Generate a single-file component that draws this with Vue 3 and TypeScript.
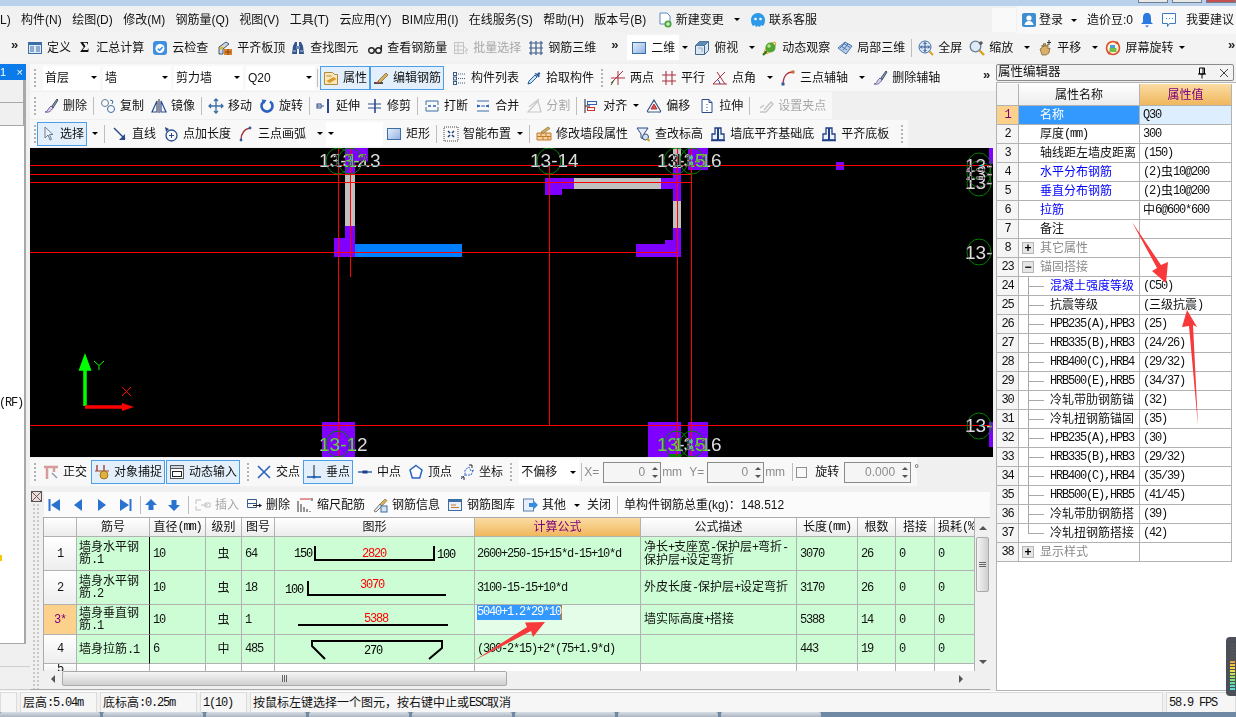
<script setup lang="ts">
interface Item {
  t?: string
  i?: string
  caret?: boolean
  cs?: boolean
  off?: boolean
  on?: boolean
  join?: boolean
  sep?: boolean
  grip?: boolean
  chev?: boolean
  sel?: number
  ml?: number
  tint?: boolean
}

// 16x16 toolbar icons
const icons: Record<string, string> = {
  def: '<rect x="1.5" y="2.5" width="13" height="11" fill="#dfe8f5" stroke="#3a6ea5"/><rect x="1.5" y="2.5" width="13" height="2.5" fill="#3a6ea5"/><path d="M3 7h4M3 9h4M3 11h4M9 7h4M9 9h4M9 11h4" stroke="#3a6ea5"/>',
  cloud: '<rect x="1" y="1" width="14" height="14" rx="3" fill="#3f8fe0"/><circle cx="8" cy="8.5" r="4.5" fill="#fff"/><path d="M5.8 8.5l1.8 1.8 3-3.3" fill="none" stroke="#3f8fe0" stroke-width="1.5"/>',
  flush: '<path d="M2 14V7l7-5 3 2-6 5v5z" fill="#cfd8e6" stroke="#456"/><rect x="7" y="9" width="8" height="6" fill="#d9822b"/><path d="M8 12h6M11 9v6" stroke="#8b4513"/><path d="M3 9l3-2" stroke="#e8b400" stroke-width="2"/>',
  binoc: '<path d="M2 14l1-8 2-4h2v12zM9 14V2h2l2 4 1 8z" fill="#33558f"/><rect x="6" y="6" width="4" height="3" fill="#6d88b5"/><path d="M3 11h3M10 11h3" stroke="#bcd"/>',
  glasses: '<g fill="none" stroke="#222" stroke-width="1.4"><circle cx="4.5" cy="10.5" r="2.8"/><circle cx="11.5" cy="10.5" r="2.8"/><path d="M7.3 10h1.4M14.3 10V5"/></g>',
  batch: '<g fill="none" stroke="#c4c4c4"><rect x="1.5" y="2.5" width="9" height="11"/><path d="M1.5 6h9M1.5 10h9M5 2.5v11M10 6l5 4-3 1 2 3"/></g>',
  bar3d: '<g fill="none" stroke="#3c5a88" stroke-width="1.2"><path d="M1 3h14M1 13h14M3 1v14M8 1v14M13 1v14M1 8h14"/></g>',
  rect: '<defs><linearGradient id="rg" x1="0" y1="0" x2="1" y2="1"><stop offset="0" stop-color="#e8f0fb"/><stop offset="1" stop-color="#8fb0e4"/></linearGradient></defs><rect x="1.5" y="2.5" width="13" height="11" fill="url(#rg)" stroke="#3a6ea5"/>',
  top: '<path d="M1.5 5.5l4-4h9v9l-4 4h-9z" fill="#dbe8f4" stroke="#44688c"/><path d="M1.5 5.5h9v9M10.5 5.5l4-4" fill="none" stroke="#44688c"/><path d="M1.5 5.5l4-4h9l-4 4z" fill="#5b8ab4"/><path d="M4 8h4v4" fill="none" stroke="#9ab"/>',
  orbit: '<ellipse cx="8" cy="8" rx="7.5" ry="2.6" transform="rotate(-45 8 8)" fill="none" stroke="#d9a21b"/><circle cx="8.5" cy="7.5" r="5" fill="#4fa52f"/><circle cx="7" cy="6" r="1.8" fill="#b8e68e"/><path d="M1 15l4-4" stroke="#2b6e16" stroke-width="2"/>',
  local3d: '<path d="M1 8l7-6 7 4-6 8z" fill="#b9d0ec" stroke="#4a75a8"/><path d="M4 6l6 4M7 3.5l6 4M6 10l5-6M3 8l5-5" stroke="#4a75a8" fill="none"/>',
  full: '<circle cx="7" cy="7" r="6" fill="#dbe8f8" stroke="#3c6ca8"/><path d="M7 2.5v9M2.5 7h9" stroke="#2d4f86"/><path d="M5.5 4L7 2.5 8.5 4M5.5 10L7 11.5 8.5 10M4 5.5L2.5 7 4 8.5M10 5.5L11.5 7 10 8.5" fill="none" stroke="#2d4f86"/><path d="M11.5 11.5l3.5 3.5" stroke="#d9a21b" stroke-width="2"/>',
  zoom: '<circle cx="6.5" cy="6.5" r="5.3" fill="#dfeaf7" stroke="#6a7f96" stroke-width="1.3"/><path d="M10.5 10.5l4.5 4.5" stroke="#d9a21b" stroke-width="2.4"/><path d="M12 1v4M10 3h4" stroke="#333"/>',
  hand: '<path d="M3 9l2-1V5l1.5 2V3.5L8 6.5V3l1.5 3.5L11 4v5l2-1-1 5-3 2H5z" fill="#d8b06a" stroke="#7a5c2a" stroke-width=".7"/><path d="M12 0v5M10 2.5h4" stroke="#333"/>',
  spin: '<circle cx="8" cy="8" r="6.5" fill="#fff4d0" stroke="#e04a2a" stroke-width="1.6"/><rect x="4.5" y="8" width="7" height="4" fill="#6fc04a"/><rect x="5" y="5" width="5" height="3" fill="#4a9de0"/><path d="M12 1l2 3h-3.5zM4 15L2 12h3.5z" fill="#e04a2a"/>',
  attr: '<path d="M1.5 2.5h8l2 2h3v10h-13z" fill="#fbe7b9" stroke="#b38a3c"/><path d="M3.5 11l7-4 3 2-7 4z" fill="#d99a2b"/><path d="M3.5 6h5" stroke="#b38a3c"/>',
  edit: '<path d="M1 13h9" stroke="#222" stroke-width="1.6"/><path d="M5 11l8-8 2 2-8 8z" fill="#d8b15c" stroke="#7a5c2a" stroke-width=".7"/><path d="M3 13l2-2 2 2z" fill="#d9482a"/>',
  list: '<g fill="none" stroke="#3a5a88"><rect x="2.5" y="2.5" width="3" height="3"/><rect x="2.5" y="7" width="3" height="3"/><rect x="2.5" y="11.5" width="3" height="3"/><path d="M7 4h7M7 8.5h7M7 13h7" stroke-dasharray="1 1"/></g>',
  pick: '<path d="M2 14l1-3 6-6 2 2-6 6z" fill="#cde3f8" stroke="#2a5d9c"/><path d="M8.5 3.5l4 4 1.5-1.5-1-1 1.5-1.5-1.5-1.5L11 4l-1-1z" fill="#2a5d9c"/>',
  twop: '<path d="M1 13L13 1M1 8h14M8 1v14" stroke="#b03040" fill="none"/><path d="M1 15l3-5" stroke="#2a6a2a"/>',
  par: '<path d="M1 5h14M1 11h14M5 1v14M11 1v14" stroke="#a83040" fill="none" stroke-width="1.1"/>',
  ang: '<path d="M1 14h14M1 14L13 2M5 2l8 12" stroke="#a83040" fill="none"/><path d="M8 14a7 7 0 0 0-2-4" stroke="#2a4a9c" fill="none"/>',
  arc: '<path d="M3 15C3 6 7 2 13 2" stroke="#b03040" fill="none" stroke-width="1.3"/><rect x="1.5" y="12.5" width="3" height="3" fill="#2a5d9c"/><rect x="11.5" y="0.5" width="3" height="3" fill="#d06a2a"/>',
  brush: '<path d="M9 8l5-7 1 1-5 8z" fill="#8aa0c0" stroke="#456"/><path d="M2 14c3 0 3-4 6-6l2 2c-2 3-4 5-8 4z" fill="#d8d0e8" stroke="#7060a0"/>',
  copy: '<circle cx="5" cy="5" r="3.5" fill="none" stroke="#6a7f96"/><circle cx="11" cy="11" r="3.5" fill="none" stroke="#3a6ea5"/><path d="M10 2l3 1-1 3" fill="none" stroke="#3a6ea5"/>',
  mirror: '<path d="M8 1v14" stroke="#223"/><path d="M6 3v11H1zM10 3v11h5z" fill="none" stroke="#2a4a8c" stroke-width="1.2"/>',
  move: '<path d="M8 1v14M1 8h14M6 3l2-2 2 2M6 13l2 2 2-2M3 6L1 8l2 2M13 6l2 2-2 2" fill="none" stroke="#3a6ea5" stroke-width="1.3"/>',
  rot: '<path d="M11 3.5a5.5 5.5 0 1 1-6 0" fill="none" stroke="#2a62c0" stroke-width="2.6"/><path d="M2.5 1.5l5 .5-2.5 4z" fill="#2a62c0"/>',
  ext: '<path d="M1 8h7" stroke="#2a4a8c" stroke-width="1.2" stroke-dasharray="3 1"/><rect x="1" y="6" width="4" height="4" fill="none" stroke="#2a4a8c"/><path d="M12 1v14" stroke="#2a4a8c" stroke-width="2"/>',
  trim: '<path d="M1 6h13M1 10h13" stroke="#2a4a8c"/><path d="M8 1v14" stroke="#2a4a8c" stroke-width="1.6"/>',
  cut: '<path d="M2 3h12M2 13h12M2 3v4M14 3v4M2 9v4M14 9v4" fill="none" stroke="#3a6ea5"/><path d="M4 8h3M9 8h3" stroke="#2a62c0" stroke-width="1.5"/>',
  merge: '<path d="M2 3h12M2 13h12" stroke="#3a6ea5"/><path d="M2 7l3 1-3 1M14 7l-3 1 3 1" fill="#2a62c0" stroke="#2a62c0"/><path d="M6 8h4" stroke="#2a62c0"/>',
  split: '<path d="M2 14h13L12 3zM13 1L3 9" fill="none" stroke="#c8c8c8" stroke-width="1.2"/>',
  align: '<path d="M2 1v14" stroke="#223"/><rect x="4.5" y="3.5" width="9" height="3" fill="none" stroke="#2a62c0"/><rect x="4.5" y="9.5" width="7" height="3" fill="none" stroke="#d03030"/><path d="M2 8h5" stroke="#223"/>',
  offset: '<path d="M8 2l6 10a1 1 0 0 1-1 2H3a1 1 0 0 1-1-2z" fill="#fff" stroke="#3a5a88" stroke-width="1.2"/><path d="M8 6l3 5H5z" fill="#e05050" stroke="#b03030"/>',
  stretch: '<path d="M3 1.5h7l3 3v10H3z" fill="#fff" stroke="#2a4a8c"/><path d="M8 6v1M8 9v1M8 12v1M10 1.5v3h3" stroke="#2a4a8c" fill="none"/>',
  grip: '<path d="M2 14h6M6 12l7-8 2 2-7 8M2 10l4-3" fill="none" stroke="#c4c4c4" stroke-width="1.4"/>',
  cursor: '<path d="M5 1v11l3-3 2 5 1.5-.6L9.5 8.5H13z" fill="#eef2f8" stroke="#6a7f96"/>',
  line: '<path d="M2 2l11 11" stroke="#2a4a8c" stroke-width="1.4"/><path d="M13 8v6H7z" fill="#2a4a8c"/>',
  plen: '<circle cx="8.5" cy="9.5" r="5.5" fill="none" stroke="#2a4a8c" stroke-width="1.3"/><path d="M8.5 7v5M6 9.5h5" stroke="#2a4a8c"/><path d="M2 1l4 2-3 3z" fill="#2a4a8c"/>',
  arc3: '<path d="M3 14C3 7 7 3 12 2" stroke="#a83040" fill="none" stroke-width="1.3"/><circle cx="3" cy="14" r="1.4" fill="#2a5d9c"/><circle cx="12" cy="2" r="1.4" fill="#2a5d9c"/>',
  smart: '<rect x="1" y="1" width="14" height="14" fill="none" stroke="#444" stroke-dasharray="1 1"/><path d="M5 5l2 2M11 5L9 7M5 11l2-2M11 11L9 9" stroke="#1a3a7c" stroke-width="1.5"/>',
  wall: '<path d="M1 14V7h14v7zM1 10.5h14M5 7v3.5M10 7v3.5M7 10.5V14M12 10.5V14" fill="#f3d2a0" stroke="#c47a2a"/><path d="M5 6l7-5 2 1.5-7 5z" fill="#d8b15c" stroke="#7a5c2a" stroke-width=".6"/>',
  elev: '<path d="M2 2h11L9 8v5l-3-1V8z" fill="#e8ecf4" stroke="#2a4a8c"/><circle cx="10.5" cy="11" r="3" fill="#cfe0f5" stroke="#456"/><path d="M12.5 13l2 2" stroke="#d9a21b" stroke-width="2"/>',
  base: '<path d="M2 14V8h3V2h6v6h3v6z" fill="#eef3fa" stroke="#1f3f86" stroke-width="1.3"/><path d="M8 2v12" stroke="#1f3f86" stroke-width="2"/><path d="M1 14.5h14" stroke="#1f3f86" stroke-width="1.5"/>',
  ortho: '<path d="M1 3h14M4 3v12M11 3v5" stroke="#d89a9a" stroke-width="2.5" fill="none"/><path d="M9 9l5 5" stroke="#8a9ab0" stroke-width="1.4"/>',
  snap: '<path d="M3 1v6M10 1v6" stroke="#a04030" stroke-width="1.4"/><path d="M1 7h14" stroke="#a04030"/><circle cx="10" cy="11" r="4" fill="#e0b040" stroke="#a07820"/>',
  dyn: '<rect x="1.5" y="1.5" width="13" height="13" fill="#fff" stroke="#555"/><rect x="1.5" y="1.5" width="13" height="3" fill="#c8d4e4" stroke="#555"/><rect x="3.5" y="7.5" width="9" height="5" fill="#fff" stroke="#222"/>',
  cross: '<path d="M2 2l12 12M14 2L2 14" stroke="#2a62c0" stroke-width="1.6"/>',
  perp: '<path d="M1 13h14" stroke="#1f5fb0" stroke-width="1.6"/><path d="M8 1v12" stroke="#222"/><circle cx="8" cy="13" r="1.6" fill="#1f5fb0"/>',
  mid: '<path d="M1 8h14" stroke="#1f5fb0" stroke-width="1.4"/><rect x="5.5" y="6.5" width="5" height="3" fill="#1f3f86"/>',
  vert: '<path d="M8 1.5l6 4.5-2.3 8H4.3L2 6z" fill="#fff" stroke="#2a62c0" stroke-width="1.5"/>',
  coord: '<path d="M2 15l4-4v-5l4-3 2 4 3-1M6 11h6l2-4" fill="none" stroke="#2a62c0" stroke-dasharray="2 1"/><path d="M2 13h3v3M10 1h3v3" fill="none" stroke="#223"/>',
  first: '<path d="M2.5 2v12h2V2zM14 2v12L5 8z" fill="#2a72d0"/>',
  prev: '<path d="M12 2v12L4 8z" fill="#2a72d0"/>',
  next: '<path d="M4 2v12l8-6z" fill="#2a72d0"/>',
  last: '<path d="M2 2v12l9-6zM11.5 2v12h2V2z" fill="#2a72d0"/>',
  up: '<path d="M8 2l6 6h-3.5v5h-5V8H2z" fill="#2a72d0"/>',
  down: '<path d="M8 14L2 8h3.5V3h5v5H14z" fill="#2a72d0"/>',
  ins: '<path d="M1 3h5M1 13h5M1 3v4M1 9v4M6 8h7M10 6h5v4h-5z" fill="none" stroke="#c0c0c0"/>',
  del: '<path d="M1.5 2.5h9M1.5 6.5h9M1.5 10.5h9M1.5 2.5v8M10.5 2.5v8" fill="none" stroke="#3a5a88"/><path d="M7 8.5h6" stroke="#222"/><path d="M13 6.5l3 2-3 2z" fill="#222"/>',
  scale: '<path d="M1 15V4M4 15V7M7 15v-5M10 15v-3M13 15v-1" stroke="#333"/><path d="M3 2h11" stroke="#d03030"/><path d="M15 1v3" stroke="#333"/>',
  info: '<path d="M8 7l5-5 2 1.5-5 5.5z" fill="#d8b15c" stroke="#7a5c2a" stroke-width=".6"/><path d="M2 14l6-7 2 2-6 6z" fill="#e8e8e8" stroke="#777"/><rect x="9" y="9" width="6" height="6" fill="#d6e2f2" stroke="#3a6ea5"/>',
  lib: '<rect x="1.5" y="2.5" width="13" height="11" fill="#eef" stroke="#3a6ea5"/><rect x="1.5" y="2.5" width="13" height="2.5" fill="#3a6ea5"/><path d="M4 8h5M4 10.5h8" stroke="#c08020"/>',
  other: '<rect x="1.5" y="2" width="10" height="12" fill="#e8eef8" stroke="#5a7fa8"/><path d="M7 6h4V3l5 5-5 5v-3H7z" fill="#3a8ae0"/>',
}

const mainBar: Item[] = [
  { i: 'def', t: '定义' }, { t: 'Σ', tint: true, ml: 2 }, { t: '汇总计算' }, { i: 'cloud', t: '云检查', ml: 1 },
  { i: 'flush', t: '平齐板顶', ml: 2 }, { i: 'binoc', t: '查找图元', ml: -2 }, { i: 'glasses', t: '查看钢筋量', ml: 2 },
  { i: 'batch', t: '批量选择', off: true, ml: -1 }, { i: 'bar3d', t: '钢筋三维' },
]
const viewBar: Item[] = [
  { i: 'top', t: '俯视', caret: true }, { i: 'orbit', t: '动态观察' }, { i: 'local3d', t: '局部三维' }, { sep: true },
  { i: 'full', t: '全屏' }, { i: 'zoom', t: '缩放', caret: true }, { i: 'hand', t: '平移', caret: true }, { i: 'spin', t: '屏幕旋转', caret: true, cs: true },
]
const rows: { cls: string; items: Item[] }[] = [
  {
    cls: 'full',
    items: [
      { grip: true }, { sel: 57, t: '首层' }, { sel: 68, t: '墙' }, { sel: 69, t: '剪力墙' }, { sel: 69, t: 'Q20' }, { sep: true },
      { i: 'attr', t: '属性', on: true, join: true, ml: -4 }, { i: 'edit', t: '编辑钢筋', on: true }, { i: 'list', t: '构件列表' }, { i: 'pick', t: '拾取构件' },
      { grip: true }, { i: 'twop', t: '两点' }, { i: 'par', t: '平行' }, { i: 'ang', t: '点角', caret: true }, { i: 'arc', t: '三点辅轴', caret: true }, { i: 'brush', t: '删除辅轴' },
      { chev: true },
    ],
  },
  {
    cls: 'padded',
    items: [
      { grip: true }, { i: 'brush', t: '删除' }, { sep: true }, { i: 'copy', t: '复制' }, { i: 'mirror', t: '镜像' }, { sep: true },
      { i: 'move', t: '移动' }, { i: 'rot', t: '旋转' }, { sep: true }, { i: 'ext', t: '延伸' }, { i: 'trim', t: '修剪' }, { sep: true },
      { i: 'cut', t: '打断' }, { i: 'merge', t: '合并' }, { i: 'split', t: '分割', off: true }, { sep: true },
      { i: 'align', t: '对齐', caret: true, cs: true }, { i: 'offset', t: '偏移' }, { i: 'stretch', t: '拉伸', ml: 2 }, { sep: true }, { i: 'grip', t: '设置夹点', off: true, ml: 2 },
    ],
  },
  {
    cls: '',
    items: [
      { grip: true }, { i: 'cursor', t: '选择', on: true, ml: -6 }, { caret: true, ml: -2 }, { sep: true }, { i: 'line', t: '直线', ml: 1 }, { i: 'plen', t: '点加长度' },
      { i: 'arc3', t: '三点画弧', caret: true }, { sel: 57, ml: -4 }, { i: 'rect', t: '矩形' }, { sep: true }, { i: 'smart', t: '智能布置', caret: true, cs: true }, { sep: true },
      { i: 'wall', t: '修改墙段属性' }, { i: 'elev', t: '查改标高' }, { i: 'base', t: '墙底平齐基础底' }, { i: 'base', t: '平齐底板' },
    ],
  },
]
const snapBar: Item[] = [
  { grip: true }, { i: 'ortho', t: '正交' }, { i: 'snap', t: '对象捕捉', on: true, join: true, ml: -3 }, { i: 'dyn', t: '动态输入', on: true, ml: 1 }, { grip: true },
  { i: 'cross', t: '交点' }, { i: 'perp', t: '垂点', on: true, ml: -4 }, { i: 'mid', t: '中点', ml: -3 }, { i: 'vert', t: '顶点' }, { i: 'coord', t: '坐标' },
  { grip: true }, { sel: 60, t: '不偏移' },
]
const rebarBar: Item[] = [
  { i: 'first', ml: 1 }, { i: 'prev', ml: 1 }, { i: 'next', ml: 1 }, { i: 'last', ml: 1 }, { sep: true }, { i: 'up', ml: -4 }, { i: 'down' }, { sep: true },
  { i: 'ins', t: '插入', off: true }, { i: 'del', t: '删除' }, { i: 'scale', t: '缩尺配筋' }, { i: 'info', t: '钢筋信息' }, { i: 'lib', t: '钢筋图库' },
  { i: 'other', t: '其他', caret: true }, { t: '关闭' }, { sep: true }, { t: '单构件钢筋总重(kg)：148.512' },
]

const menus = ['(L)', '构件(N)', '绘图(D)', '修改(M)', '钢筋量(Q)', '视图(V)', '工具(T)', '云应用(Y)', 'BIM应用(I)', '在线服务(S)', '帮助(H)', '版本号(B)']

// mixed cells: ascii runs take the narrow mono look, everything else the CJK font
const runs = (s: string) =>
  (s.match(/[\x00-\x7f]+|[^\x00-\x7f]+/g) ?? []).map((r) => ({ s: r, lat: r.charCodeAt(0) < 128 }))

const heads = [
  { t: '' }, { t: '筋号' }, { t: '直径(mm)' }, { t: '级别' }, { t: '图号' }, { t: '图形' },
  { t: '计算公式', hot: true }, { t: '公式描述' }, { t: '长度(mm)' }, { t: '根数' }, { t: '搭接' }, { t: '损耗(%', left: true },
]

interface Fig {
  path: string
  w: number
  labels: { x: number; y: number; t: string; red?: boolean; mid?: boolean }[]
}
const bars: { n: string; h: string; name: string; dia: string; grade: string; no: string; fig: Fig; formula: string; desc: string; len: string; cnt: string; cur?: boolean }[] = [
  {
    n: '1', h: 'h34', name: '墙身水平钢筋.1', dia: '10', grade: '虫', no: '64',
    fig: { path: 'M40 9V23H159V9', w: 2, labels: [{ x: 19, y: 20, t: '150' }, { x: 99, y: 20, t: '2820', red: true, mid: true }, { x: 162, y: 21, t: '100' }] },
    formula: '2600+250-15+15*d-15+10*d', desc: '净长+支座宽-保护层+弯折-\n保护层+设定弯折', len: '3070', cnt: '26',
  },
  {
    n: '2', h: 'h34', name: '墙身水平钢筋.2', dia: '10', grade: '虫', no: '18',
    fig: { path: 'M33 10V24H171', w: 2, labels: [{ x: 10, y: 22, t: '100' }, { x: 97, y: 17, t: '3070', red: true, mid: true }] },
    formula: '3100-15-15+10*d', desc: '外皮长度-保护层+设定弯折', len: '3170', cnt: '26',
  },
  {
    n: '3*', h: 'h30', cur: true, name: '墙身垂直钢筋.1', dia: '10', grade: '虫', no: '1',
    fig: { path: 'M23 20H173', w: 2, labels: [{ x: 101, y: 17, t: '5388', red: true, mid: true }] },
    formula: '5040+1.2*29*10', desc: '墙实际高度+搭接', len: '5388', cnt: '14',
  },
  {
    n: '4', h: 'h29', name: '墙身拉筋.1', dia: '6', grade: '中', no: '485',
    fig: { path: 'M50 24L37 11V6H167V13L154 24', w: 2, labels: [{ x: 98, y: 19, t: '270', mid: true }] },
    formula: ' (300-2*15)+2*(75+1.9*d)', desc: '', len: '443', cnt: '19',
  },
]

interface Prop {
  n: number
  name: string
  val?: string
  blue?: boolean
  tree?: boolean
  last?: boolean
  group?: string
  sel?: boolean
}
const props: Prop[] = [
  { n: 1, name: '名称', val: 'Q30', sel: true },
  { n: 2, name: '厚度(mm)', val: '300' },
  { n: 3, name: '轴线距左墙皮距离', val: '(150)' },
  { n: 4, name: '水平分布钢筋', val: '(2)虫10@200', blue: true },
  { n: 5, name: '垂直分布钢筋', val: '(2)虫10@200', blue: true },
  { n: 6, name: '拉筋', val: '中6@600*600', blue: true },
  { n: 7, name: '备注' },
  { n: 8, name: '其它属性', group: '+' },
  { n: 23, name: '锚固搭接', group: '-' },
  { n: 24, name: '混凝土强度等级', val: '(C50)', blue: true, tree: true },
  { n: 25, name: '抗震等级', val: '(三级抗震)', tree: true },
  { n: 26, name: 'HPB235(A),HPB3', val: '(25)', tree: true },
  { n: 27, name: 'HRB335(B),HRB3', val: '(24/26)', tree: true },
  { n: 28, name: 'HRB400(C),HRB4', val: '(29/32)', tree: true },
  { n: 29, name: 'HRB500(E),HRB5', val: '(34/37)', tree: true },
  { n: 30, name: '冷轧带肋钢筋锚', val: '(32)', tree: true },
  { n: 31, name: '冷轧扭钢筋锚固', val: '(35)', tree: true },
  { n: 32, name: 'HPB235(A),HPB3', val: '(30)', tree: true },
  { n: 33, name: 'HRB335(B),HRB3', val: '(29/32)', tree: true },
  { n: 34, name: 'HRB400(C),HRB4', val: '(35/39)', tree: true },
  { n: 35, name: 'HRB500(E),HRB5', val: '(41/45)', tree: true },
  { n: 36, name: '冷轧带肋钢筋搭', val: '(39)', tree: true },
  { n: 37, name: '冷轧扭钢筋搭接', val: '(42)', tree: true, last: true },
  { n: 38, name: '显示样式', group: '+' },
]

// drawing area, coordinates relative to the black canvas
const purple: number[][] = [
  [315, 0, 23, 13.5], [315, 0, 10, 26], [315, 78, 10, 30], [304, 90, 21, 19], [292, 274, 33, 35],
  [515, 30, 29, 11], [515, 41, 17, 6], [631, 30, 20, 11], [643, 20, 8, 33], [658, 0, 20, 22],
  [643, 80, 8, 29], [635, 92, 16, 17], [606, 96, 45, 13], [806, 14, 8, 8],
  [618, 274, 33, 35], [658, 274, 20, 35], [959, 0, 4, 16], [959, 274, 4, 25],
]
const grey: number[][] = [[315, 26, 10, 52], [544, 30, 87, 11], [643, 0, 8, 20], [643, 53, 8, 27]]
const redLines: number[][] = [
  [0, 17.5, 960, 17.5], [0, 26.5, 661, 26.5], [0, 34.5, 661, 34.5], [0, 104.5, 647, 104.5], [0, 277.5, 960, 277.5],
  [308.5, 0, 308.5, 309], [320.5, 0, 320.5, 129], [519.5, 17, 519.5, 277], [647.5, 0, 647.5, 309], [661.5, 0, 661.5, 309],
]
const labels: { x: number; y: number; t: string; cx?: number; cy?: number }[] = [
  { x: 289, y: 19, t: '13-12', cx: 308, cy: 13 }, { x: 302, y: 19, t: '13-13', cx: 320, cy: 13 },
  { x: 500, y: 19, t: '13-14', cx: 519, cy: 13 }, { x: 627, y: 19, t: '13-15', cx: 646, cy: 13 }, { x: 643, y: 19, t: '13-16', cx: 662, cy: 13 },
  { x: 289, y: 303, t: '13-12', cx: 308, cy: 296 }, { x: 627, y: 303, t: '13-15', cx: 646, cy: 296 }, { x: 643, y: 303, t: '13-16', cx: 662, cy: 296 },
  { x: 935, y: 24, t: '13-', cx: 949, cy: 18 }, { x: 935, y: 32, t: '13-', cx: 949, cy: 26 }, { x: 935, y: 41, t: '13-', cx: 949, cy: 35 },
  { x: 935, y: 111, t: '13-', cx: 949, cy: 104 }, { x: 935, y: 284, t: '13-', cx: 949, cy: 278 },
]
const meter = ['#555', '#555', '#555', '#555', '#555', '#555', '#f3a43a', '#f5c33d', '#f5d63d', '#e6e24a', '#c9e24a', '#9fe05a', '#7fe07a', '#62e09a', '#4fe0c0', '#4fe0d0']
</script>

<template>
  <div class="app">
    <div class="titlebar">
      <span class="winbtn"></span><span class="winbtn"></span><span class="winbtn close"></span>
    </div>

    <div class="menubar">
      <span v-for="m in menus" :key="m" class="menu">{{ m }}</span>
      <span class="menu withicon">
        <svg class="ico" viewBox="0 0 16 16"><path d="M3 1h7l3 3v8H3z" fill="#fff" stroke="#5a8ac0"/><circle cx="11" cy="12" r="3.6" fill="#4aa83a"/><path d="M11 10v4M9 12h4" stroke="#fff"/></svg>
        新建变更<i class="caret"></i>
      </span>
      <span class="menu withicon">
        <svg class="ico" viewBox="0 0 16 16"><path d="M8 1c4 0 7 3 7 7 0 3-1 5-2 6l-2-1-1 2-2-1-2 1-1-2-2 1C2 13 1 11 1 8c0-4 3-7 7-7z" fill="#2c9ae8"/><circle cx="5.5" cy="7" r="1.3" fill="#fff"/><circle cx="10.5" cy="7" r="1.3" fill="#fff"/></svg>
        联系客服
      </span>
      <span class="blanktab"></span>
      <div class="userbox">
        <svg class="ico" viewBox="0 0 16 16"><rect x="1" y="1" width="14" height="14" rx="2" fill="#3f8fd0"/><circle cx="8" cy="6" r="2.6" fill="#fff"/><path d="M3.5 13c.5-3 2-4 4.5-4s4 1 4.5 4z" fill="#fff"/></svg>
        <span class="menu login">登录<i class="caret"></i></span>
        <span class="menu beans">造价豆:0</span>
        <svg class="ico bell" viewBox="0 0 16 16"><path d="M8 1c3 0 4 2 4 5v4l2 2H2l2-2V6c0-3 1-5 4-5z" fill="#2c7ae0"/><path d="M6 13.5h4L8 15.5z" fill="#2c7ae0"/></svg>
        <svg class="ico chat" viewBox="0 0 16 16"><path d="M1.5 1.5h13v10h-6l-2 3v-3h-5z" fill="#fff" stroke="#3a7ac0"/><path d="M5 6.5h1M8 6.5h1M11 6.5h1" stroke="#3a7ac0"/></svg>
        <span class="menu advise">我要建议</span>
      </div>
    </div>

    <div class="topbar">
      <span class="chev">»</span>
      <div class="bargroup first">
        <span v-for="(it, i) in mainBar" :key="i" class="tool" :class="{ off: it.off, sigma: it.tint }" :style="{ marginLeft: it.ml ? it.ml + 'px' : undefined }">
          <svg v-if="it.i" class="ico" viewBox="0 0 16 16" v-html="icons[it.i]"></svg>{{ it.t }}
        </span>
      </div>
      <span class="chev second">»</span>
      <div class="whitecell">
        <svg class="ico" viewBox="0 0 16 16" v-html="icons.rect"></svg>二维<span class="cellcaret"><i class="caret flush"></i></span>
      </div>
      <div class="bargroup">
        <template v-for="(it, i) in viewBar" :key="i">
          <span v-if="it.sep" class="sep"></span>
          <span v-else class="tool">
            <svg class="ico" viewBox="0 0 16 16" v-html="icons[it.i!]"></svg>{{ it.t }}<i v-if="it.caret" class="caret" :class="{ tight: it.cs }"></i>
          </span>
        </template>
      </div>
      <span class="chev last">»</span>
    </div>

    <div class="body">
      <aside class="dock">
        <div class="docktab"><span>1</span><span>×</span></div>
        <div class="dockbox">
          <div class="dockrow"></div>
          <div class="dockrow"></div>
          <div class="docklist">
            <span class="rf">(RF)</span>
            <span class="flag"></span>
          </div>
        </div>
        <div class="dockcell"></div>
        <div class="dockcell"></div>
      </aside>

      <main class="center">
        <div v-for="(row, r) in rows" :key="r" class="bar" :class="row.cls">
          <template v-for="(it, i) in row.items" :key="i">
            <span v-if="it.grip" class="grip"></span>
            <span v-else-if="it.sep" class="sep"></span>
            <span v-else-if="it.chev" class="chev end">»</span>
            <span v-else-if="it.sel" class="sel" :style="{ width: it.sel + 'px', marginLeft: it.ml ? it.ml + 'px' : undefined }">{{ it.t }}<i class="caret"></i></span>
            <span v-else class="tool" :class="{ off: it.off, on: it.on, join: it.join }" :style="{ marginLeft: it.ml ? it.ml + 'px' : undefined }">
              <svg v-if="it.i" class="ico" viewBox="0 0 16 16" v-html="icons[it.i]"></svg>{{ it.t }}<i v-if="it.caret" class="caret" :class="{ flush: !it.t, tight: it.cs }"></i>
            </span>
          </template>
          <span v-if="r === 2" class="gripcell"><span class="grip"></span></span>
        </div>

        <svg class="canvas" width="963" height="309" viewBox="0 0 963 309">
          <rect width="963" height="309" fill="#000" />
          <rect x="321" y="96" width="111" height="13" fill="#0080ff" />
          <rect v-for="(g, i) in grey" :key="'g' + i" :x="g[0]" :y="g[1]" :width="g[2]" :height="g[3]" fill="#c0c0c0" />
          <rect v-for="(p, i) in purple" :key="'p' + i" :x="p[0]" :y="p[1]" :width="p[2]" :height="p[3]" fill="#7f00ff" />
          <rect x="639" y="306" width="12" height="3" fill="#008000" />
          <line v-for="(l, i) in redLines" :key="'l' + i" :x1="l[0]" :y1="l[1]" :x2="l[2]" :y2="l[3]" stroke="#f00" />
          <ellipse v-for="(l, i) in labels" :key="'c' + i" :cx="l.cx" :cy="l.cy" rx="12" ry="13" fill="none" stroke="#008000" />
          <text v-for="(l, i) in labels" :key="'t' + i" class="axis" :x="l.x" :y="l.y">{{ l.t }}</text>
          <path d="M55 258V220M51 221l4-11 4 11z" stroke="#0f0" stroke-width="3.5" fill="#0f0" />
          <path d="M55 259H92" stroke="#f00" stroke-width="3.5" />
          <path d="M92 255l12 4-12 4z" fill="#f00" />
          <path d="M64 213l5 4.5 5-4.5M69 217.5V222" stroke="#0f0" fill="none" />
          <path d="M92 239l9 9M101 239l-9 9" stroke="#f00" fill="none" />
        </svg>

        <div class="bar snap">
          <template v-for="(it, i) in snapBar" :key="i">
            <span v-if="it.grip" class="grip"></span>
            <span v-else-if="it.sel" class="sel" :style="{ width: it.sel + 'px' }">{{ it.t }}<i class="caret"></i></span>
            <span v-else class="tool" :class="{ on: it.on, join: it.join }" :style="{ marginLeft: it.ml ? it.ml + 'px' : undefined }">
              <svg class="ico" viewBox="0 0 16 16" v-html="icons[it.i!]"></svg>{{ it.t }}
            </span>
          </template>
          <span class="sep"></span>
          <div class="offsets">
            <span class="dim xy">X=</span>
            <span class="spin x"><b>0</b><span class="arrows"><i></i><i></i></span></span>
            <span class="dim mm">mm</span>
            <span class="dim xy gapped">Y=</span>
            <span class="spin y"><b>0</b><span class="arrows"><i></i><i></i></span></span>
            <span class="dim mm">mm</span>
            <span class="sep spaced"></span>
            <span class="check"></span>
            <span class="rotlabel">旋转</span>
            <span class="spin r"><b>0.000</b><span class="arrows"><i></i><i></i></span></span>
            <span class="deg">°</span>
          </div>
        </div>

        <section class="rebar">
          <div class="rail">
            <svg class="railclose" viewBox="0 0 11 11"><rect x=".5" y=".5" width="10" height="10" fill="#e4e0e0" stroke="#555"/><path d="M1 1l9 9M10 1l-9 9" stroke="#8a4a4a"/></svg>
          </div>
          <div class="rebarmain">
            <div class="rebarbar">
              <template v-for="(it, i) in rebarBar" :key="i">
                <span v-if="it.sep" class="sep"></span>
                <span v-else class="tool" :class="{ off: it.off }" :style="{ marginLeft: it.ml ? it.ml + 'px' : undefined }">
                  <svg v-if="it.i" class="ico" viewBox="0 0 16 16" v-html="icons[it.i]"></svg>{{ it.t }}<i v-if="it.caret" class="caret short"></i>
                </span>
              </template>
            </div>
            <div class="tablewrap">
              <div class="table">
                <div class="tr head">
                  <div v-for="(h, i) in heads" :key="i" class="th" :class="{ hot: h.hot, left: h.left }">
                    <span v-for="(p, j) in runs(h.t)" :key="j" :class="{ lat: p.lat }">{{ p.s }}</span>
                  </div>
                </div>
                <div v-for="b in bars" :key="b.n" class="tr" :class="b.h">
                  <div class="rowno" :class="{ cur: b.cur }"><span class="lat">{{ b.n }}</span></div>
                  <div class="td name">
                    <span class="wrap"><span v-for="(p, j) in runs(b.name)" :key="j" :class="{ lat: p.lat }">{{ p.s }}</span></span>
                  </div>
                  <div class="td"><span class="lat">{{ b.dia }}</span></div>
                  <div class="td mid">{{ b.grade }}</div>
                  <div class="td"><span class="lat">{{ b.no }}</span></div>
                  <div class="td fig">
                    <svg width="199" height="29" viewBox="0 0 199 29">
                      <path :d="b.fig.path" fill="none" stroke="#000" :stroke-width="b.fig.w" />
                      <text v-for="l in b.fig.labels" :key="l.t" class="figtext" :class="{ red: l.red }" :x="l.x" :y="l.y" :text-anchor="l.mid ? 'middle' : 'start'">{{ l.t }}</text>
                    </svg>
                  </div>
                  <div class="td formula" :class="{ editing: b.cur }">
                    <span class="lat" :class="{ picked: b.cur }">{{ b.formula }}</span>
                  </div>
                  <div class="td desc"><span class="wrap"><span v-for="(p, j) in runs(b.desc)" :key="j" :class="{ lat: p.lat }">{{ p.s }}</span></span></div>
                  <div class="td"><span class="lat">{{ b.len }}</span></div>
                  <div class="td"><span class="lat">{{ b.cnt }}</span></div>
                  <div class="td"><span class="lat">0</span></div>
                  <div class="td"><span class="lat">0</span></div>
                </div>
                <div class="tr stub">
                  <div class="rowno"><span class="lat">5</span></div>
                  <div v-for="c in 11" :key="c" class="td blank"></div>
                </div>
              </div>
              <div class="vscroll">
                <span class="scrollbtn"><i class="tri up"></i></span>
                <span class="vthumb"><em></em><em></em><em></em></span>
                <span class="vtrack"></span>
                <span class="scrollbtn"><i class="tri down"></i></span>
              </div>
            </div>
            <div class="hscroll">
              <span class="hbtn"><i class="tri left"></i></span>
              <span class="hthumb"><em></em><em></em><em></em></span>
              <span class="htrack"></span>
              <span class="hbtn"><i class="tri right"></i></span>
            </div>
          </div>
        </section>
      </main>

      <aside class="editor">
        <div class="edtitle">
          <span>属性编辑器</span>
          <svg class="pin" viewBox="0 0 10 12"><path d="M2.5 1h5v6h-5zM1 7h8M5 7v4.5M6 1v6" fill="none" stroke="#000"/></svg>
          <svg class="edx" viewBox="0 0 10 10"><path d="M1 1l8 8M9 1L1 9" stroke="#444" fill="none"/></svg>
        </div>
        <div class="props">
          <div class="prow phead">
            <div class="pno"></div>
            <div class="pname phd">属性名称</div>
            <div class="pval phd hot">属性值</div>
          </div>
          <div v-for="p in props" :key="p.n" class="prow">
            <div class="pno" :class="{ cur: p.sel }"><span class="lat">{{ p.n }}</span></div>
            <div class="pname" :class="{ blue: p.blue, selname: p.sel, grp: p.group, tree: p.tree, last: p.last }">
              <span v-if="p.group" class="expander">{{ p.group === '+' ? '+' : '−' }}</span>
              <span v-for="(r, j) in runs(p.name)" :key="j" :class="{ lat: r.lat }">{{ r.s }}</span>
            </div>
            <div class="pval" :class="{ selval: p.sel }">
              <span v-for="(r, j) in runs(p.val ?? '')" :key="j" :class="{ lat: r.lat }">{{ r.s }}</span>
            </div>
          </div>
        </div>
      </aside>
    </div>

    <footer class="status">
      <span class="scell s0"></span>
      <span class="scell s1"><span v-for="(r, j) in runs('层高:5.04m')" :key="j" :class="{ lat: r.lat }">{{ r.s }}</span></span>
      <span class="scell s2"><span v-for="(r, j) in runs('底标高:0.25m')" :key="j" :class="{ lat: r.lat }">{{ r.s }}</span></span>
      <span class="scell s3"><span class="lat">1(10)</span></span>
      <span class="scell s4"><span v-for="(r, j) in runs('按鼠标左键选择一个图元，按右键中止或ESC取消')" :key="j" :class="{ lat: r.lat }">{{ r.s }}</span></span>
      <span class="scell s5"><span class="lat">58.9 FPS</span></span>
    </footer>
    <div class="taskbar">
      <span v-for="n in 8" :key="n" class="task"></span>
    </div>

    <div class="meter">
      <i v-for="(c, i) in meter" :key="i" :style="{ background: c }"></i>
    </div>

    <!-- red annotation arrows drawn over the screenshot -->
    <svg class="marks" width="1236" height="717" viewBox="0 0 1236 717">
      <polygon points="475,660 527,627 525,622.5 545,622 533,637 531,631" />
      <polygon points="1132,222 1157,268 1152,271 1166,283 1168,262 1161,265" />
      <polygon points="1198,426 1189,326 1182,327 1187,310 1197,327 1193,325" />
    </svg>
  </div>
</template>

<style>
html,
body {
  margin: 0;
  background: #f0f0f0;
}
</style>

<style scoped>
.app {
  position: relative;
  width: 1236px;
  height: 717px;
  overflow: hidden;
  display: flex;
  flex-direction: column;
  background: #f0f0f0;
  color: #111;
  font: 12px/1 "Liberation Sans", "Noto Sans CJK SC", sans-serif;
}
.lat {
  font: 12px/1 "Liberation Mono", monospace;
  letter-spacing: -1.2px;
}
.titlebar {
  height: 6px;
  flex: none;
  background: #b9d1ea;
  display: flex;
  justify-content: flex-end;
  gap: 4px;
}
.winbtn {
  width: 28px;
  height: 2px;
  background: #e8e8e8;
  border: 1px solid #6f7f90;
  border-top: 0;
}
.winbtn.close {
  background: #c75050;
}
.menubar {
  height: 27px;
  flex: none;
  display: flex;
  align-items: center;
  gap: 10.4px;
  background: #f1f1f1;
  position: relative;
}
.menu {
  white-space: nowrap;
  display: inline-flex;
  align-items: center;
}
.menu:first-child {
  margin-left: -4px;
}
.withicon {
  gap: 3px;
}
.blanktab {
  position: absolute;
  left: 992px;
  top: 2px;
  width: 24px;
  height: 24px;
  background: #f9f9f9;
}
.userbox {
  position: absolute;
  left: 1017px;
  right: 0;
  top: 0;
  height: 28px;
  display: flex;
  align-items: center;
  padding-left: 4px;
  background: #f8f8f8;
}
.login {
  margin-left: 2px;
}
.login .caret {
  margin-left: 8px;
}
.beans {
  margin-left: 10px;
}
.bell {
  margin-left: 6px;
}
.chat {
  margin-left: 6px;
}
.advise {
  margin-left: 9px;
}
.ico {
  width: 16px;
  height: 16px;
  flex: none;
}
.caret {
  display: inline-block;
  width: 0;
  height: 0;
  border: 3px solid transparent;
  border-top: 3px solid #000;
  border-bottom: 0;
  margin-left: 7px;
}
.caret.flush {
  margin-left: 0;
}
.caret.tight {
  margin-left: 2px;
}
.caret.short {
  margin-left: 4px;
}
.topbar {
  height: 29px;
  flex: none;
  display: flex;
  align-items: center;
  background: #f3f3f3;
}
.chev {
  width: 8px;
  font-size: 13px;
  font-weight: 700;
  margin-top: -7px;
  margin-left: 11px;
  color: #222;
}
.chev.second {
  margin-left: 15px;
}
.chev.last {
  margin-left: auto;
  margin-right: 0;
}
.chev.end {
  margin-left: auto;
  margin-right: 5px;
}
.bargroup {
  display: flex;
  align-items: center;
  gap: 7px;
}
.bargroup.first {
  margin-left: 8px;
}
.whitecell {
  margin-left: 8px;
  margin-right: 4px;
  height: 25px;
  width: 63px;
  flex: none;
  display: flex;
  align-items: center;
  gap: 4px;
  padding-left: 4px;
  box-sizing: border-box;
  background: #fff;
  white-space: nowrap;
}
.cellcaret {
  flex: 1;
  align-self: stretch;
  display: flex;
  align-items: center;
  justify-content: center;
  background: #f2f2f2;
}
.tool {
  display: inline-flex;
  align-items: center;
  gap: 4px;
  white-space: nowrap;
  height: 22px;
}
.tool.off {
  color: #a8a8a8;
}
.tool.sigma {
  font: 700 14px "Liberation Serif", serif;
  color: #111;
}
.tool.on {
  padding: 0 2px;
  border: 1px solid #4d9ee8;
  background: #e3f0fc;
}
.tool.join {
  margin-right: -7px;
}
.body {
  flex: 1;
  min-height: 0;
  display: flex;
}
.dock {
  width: 30px;
  flex: none;
  padding-top: 2px;
  display: flex;
  flex-direction: column;
}
.docktab {
  width: 26px;
  height: 16px;
  background: #0a7be8;
  color: #fff;
  display: flex;
  align-items: center;
  justify-content: space-between;
  padding: 0 3px 0 0;
  box-sizing: border-box;
  font-size: 11px;
}
.dockbox {
  width: 24px;
  height: 563px;
  border-right: 2px solid #a8a8a8;
  border-bottom: 1px solid #a8a8a8;
  background: #fff;
  display: flex;
  flex-direction: column;
}
.dockrow {
  height: 22px;
  flex: none;
  background: #f0f0f0;
  border: 1px solid #a8a8a8;
  border-left: 0;
  border-top: 0;
}
.docklist {
  flex: 1;
  display: flex;
  flex-direction: column;
  overflow: hidden;
  font: 12px "Liberation Mono", monospace;
}
.rf {
  margin: 270px 0 0 -1px;
  letter-spacing: -1.2px;
}
.flag {
  display: block;
  width: 2px;
  height: 6px;
  margin-top: 145px;
  background: #f5c800;
}
.dockcell {
  height: 22px;
  border-bottom: 1px solid #cfcfcf;
}
.center {
  width: 966px;
  flex: none;
  padding-top: 2px;
  display: flex;
  flex-direction: column;
  gap: 1px;
}
.bar {
  height: 27px;
  flex: none;
  display: flex;
  align-items: center;
  gap: 7px;
  padding-left: 4px;
  background: #f8f8f8;
  width: fit-content;
  box-sizing: border-box;
}
.bar.full {
  width: 100%;
}
.bar.padded {
  padding-right: 6px;
}
.bar.snap {
  height: 28px;
  width: 887px;
}
.grip {
  width: 2px;
  height: 18px;
  flex: none;
  background: repeating-linear-gradient(#b4b4b4 0 2px, transparent 2px 4px);
}
.gripcell {
  width: 12px;
  height: 27px;
  display: flex;
  align-items: center;
  justify-content: center;
  background: #f8f8f8;
}
.sep {
  width: 1px;
  height: 18px;
  flex: none;
  background: #bdbdbd;
  margin: 0 -1px;
}
.sel {
  height: 24px;
  flex: none;
  display: inline-flex;
  align-items: center;
  justify-content: space-between;
  box-sizing: border-box;
  padding: 0 3px 0 2px;
  background: #fff;
  margin-right: -4px;
  white-space: nowrap;
}
.sel .caret {
  margin-left: 0;
}
.canvas {
  display: block;
  flex: none;
}
.axis {
  font: 19px "Liberation Sans", sans-serif;
  fill: #dcdcdc;
  mix-blend-mode: difference;
}
.offsets {
  display: flex;
  align-items: center;
  margin-left: -4px;
}
.dim {
  color: #8c8c8c;
  white-space: nowrap;
}
.dim.xy {
  width: 19px;
}
.dim.mm {
  width: 22px;
  margin-left: 1px;
}
.dim.gapped {
  margin-left: 5px;
  width: 18px;
}
.spin {
  height: 21px;
  flex: none;
  box-sizing: border-box;
  display: flex;
  align-items: center;
  border: 1px solid #8a8a8a;
  background: #f5f5f5;
}
.spin.x {
  width: 58px;
}
.spin.y {
  width: 57px;
}
.spin.r {
  width: 67px;
  margin-left: 5px;
}
.spin b {
  flex: 1;
  text-align: right;
  font-weight: 400;
  color: #8c8c8c;
  padding-right: 4px;
}
.arrows {
  width: 11px;
  display: flex;
  flex-direction: column;
  gap: 5px;
  align-items: center;
}
.arrows i {
  border: 3px solid transparent;
  border-top: 0;
  border-bottom: 3px solid #555;
}
.arrows i:last-child {
  border-bottom: 0;
  border-top: 3px solid #555;
}
.sep.spaced {
  margin: 0 3px 0 5px;
}
.check {
  width: 11px;
  height: 11px;
  box-sizing: border-box;
  border: 1px solid #8f8f8f;
  flex: none;
  margin-right: 8px;
}
.rotlabel {
  white-space: nowrap;
}
.deg {
  margin-left: 3px;
  margin-top: -6px;
  color: #555;
}
.rebar {
  height: 201px;
  margin-top: 2px;
  flex: none;
  display: flex;
  width: 960px;
  border-bottom: 1px solid #aaa;
  box-sizing: border-box;
}
.rail {
  width: 13px;
  flex: none;
  background: repeating-linear-gradient(#c9c9c9 0 2px, transparent 2px 4px) 3px 15px / 2px 100% no-repeat,
    repeating-linear-gradient(#c9c9c9 0 2px, transparent 2px 4px) 7px 15px / 2px 100% no-repeat;
}
.railclose {
  display: block;
  width: 11px;
  height: 11px;
  margin-left: 1px;
  margin-top: 2px;
}
.rebarmain {
  flex: 1;
  min-width: 0;
  display: flex;
  flex-direction: column;
}
.rebarbar {
  height: 26px;
  margin-top: 3px;
  flex: none;
  display: flex;
  align-items: center;
  gap: 7px;
  padding-left: 1px;
  background: #fbfbfb;
  margin-left: 1px;
}
.tablewrap {
  height: 154px;
  flex: none;
  display: flex;
  border-top: 1px solid #aaa;
  box-sizing: border-box;
  margin-top: -1px;
}
.table {
  width: 932px;
  flex: none;
  overflow: hidden;
  border-left: 1px solid #aaa;
  box-sizing: border-box;
}
.tr {
  display: grid;
  grid-template-columns: 33px 73px 56px 36px 33px 200px 166px 156px 61px 38px 39px 40px;
}
.tr.head {
  height: 19px;
}
.tr.h34 {
  height: 34px;
}
.tr.h30 {
  height: 30px;
}
.tr.h29 {
  height: 29px;
}
.tr.stub {
  height: 10px;
}
.th,
.td,
.rowno {
  box-sizing: border-box;
  border-right: 1px solid #b2b2b2;
  border-bottom: 1px solid #b2b2b2;
  display: flex;
  align-items: center;
  overflow: hidden;
  white-space: nowrap;
}
.th {
  justify-content: center;
  background: linear-gradient(#fff, #ececec);
}
.th.left {
  justify-content: flex-start;
  padding-left: 3px;
}
.th.hot,
.phd.hot {
  background: linear-gradient(#fbdca3, #f0b75c);
  color: #800080;
}
.rowno {
  justify-content: center;
  background: linear-gradient(#fff, #eee);
}
.rowno.cur,
.pno.cur {
  background: #fcd18c;
  color: #800080;
}
.td {
  background: #ccfdd4;
  padding-left: 3px;
}
.td.blank {
  background: #fff;
}
.td.mid {
  justify-content: center;
  padding-left: 0;
}
.td.name {
  padding-left: 2px;
  border-right-color: #000;
}
.wrap {
  white-space: pre-line;
  line-height: 12px;
}
.td.fig {
  padding: 0;
  align-items: flex-start;
}
.td.fig svg {
  display: block;
}
.figtext {
  font: 12px "Liberation Mono", monospace;
  letter-spacing: -1.2px;
  fill: #000;
}
.figtext.red {
  fill: #f00;
}
.td.formula {
  padding-left: 2px;
}
.td.editing {
  background: #e3fde8;
  align-items: flex-start;
}
.picked {
  background: #3399ff;
  color: #fff;
  padding: 1px 0 2px;
  border-right: 1px solid #d97000;
}
.vscroll {
  width: 15px;
  flex: none;
  display: flex;
  flex-direction: column;
  background: #f0f0f0;
}
.scrollbtn {
  height: 19px;
  flex: none;
  display: flex;
  align-items: center;
  justify-content: center;
}
.vthumb {
  height: 55px;
  flex: none;
  margin: 0 1px;
  border: 1px solid #aaa;
  border-radius: 2px;
  box-sizing: border-box;
  background: linear-gradient(90deg, #f4f4f4, #cfcfcf);
  display: flex;
  flex-direction: column;
  align-items: center;
  justify-content: center;
  gap: 1px;
}
.vthumb em {
  width: 7px;
  height: 1px;
  background: #666;
}
.vtrack,
.htrack {
  flex: 1;
}
.tri {
  width: 0;
  height: 0;
  border: 4px solid transparent;
}
.tri.up {
  border-top: 0;
  border-bottom: 4px solid #555;
}
.tri.down {
  border-bottom: 0;
  border-top: 4px solid #555;
}
.tri.left {
  border-left: 0;
  border-right: 4px solid #555;
}
.tri.right {
  border-right: 0;
  border-left: 4px solid #555;
}
.hscroll {
  height: 15px;
  flex: none;
  display: flex;
  width: 927px;
  background: #f0f0f0;
}
.hbtn {
  width: 19px;
  flex: none;
  display: flex;
  align-items: center;
  justify-content: center;
}
.hthumb {
  width: 445px;
  flex: none;
  border: 1px solid #aaa;
  border-radius: 2px;
  box-sizing: border-box;
  background: linear-gradient(#f6f6f6, #cfcfcf);
  display: flex;
  align-items: center;
  justify-content: center;
  gap: 1px;
}
.hthumb em {
  width: 1px;
  height: 7px;
  background: #666;
}
.editor {
  flex: 1;
  min-width: 0;
  padding-top: 2px;
  display: flex;
  flex-direction: column;
}
.edtitle {
  height: 15px;
  flex: none;
  display: flex;
  align-items: center;
  font-size: 12.5px;
  border: 1px solid #8a8a8a;
  border-radius: 2px;
  background: #f3f3f3;
  padding-left: 1px;
  margin-right: 2px;
}
.pin {
  width: 10px;
  height: 12px;
  margin-left: auto;
}
.edx {
  width: 10px;
  height: 10px;
  margin: 0 4px 0 12px;
}
.props {
  flex: 1;
  margin-top: 1px;
  border: 1px solid #b2b2b2;
  border-right: 0;
  background: #fff;
  padding-top: 1px;
}
.prow {
  display: grid;
  grid-template-columns: 22px 121px 92px;
  height: 19px;
}
.prow.phead {
  height: 22px;
}
.pno,
.pname,
.pval {
  box-sizing: border-box;
  border-right: 1px solid #b2b2b2;
  border-bottom: 1px solid #b2b2b2;
  display: flex;
  align-items: center;
  white-space: nowrap;
  overflow: hidden;
}
.pno {
  justify-content: center;
  background: #f5f5f5;
}
.pname {
  padding-left: 21px;
  position: relative;
}
.pval {
  padding-left: 3px;
}
.phd {
  justify-content: center;
  padding: 0;
  background: linear-gradient(#fff, #ececec);
}
.pname.blue {
  color: #0000ff;
}
.pname.selname {
  background: #3399ff;
  color: #fff;
}
.pval.selval {
  background: #ddeeff;
}
.pname.grp {
  color: #8a8a8a;
}
.expander {
  position: absolute;
  left: 3px;
  top: 3px;
  width: 12px;
  height: 12px;
  box-sizing: border-box;
  border: 1px solid #b5b5b5;
  background: #e6e6e6;
  color: #000;
  font: 700 12px/10px "Liberation Sans", sans-serif;
  text-align: center;
}
.pname.tree {
  padding-left: 31px;
}
.pname.tree::before {
  content: "";
  position: absolute;
  left: 9px;
  top: 0;
  bottom: 0;
  width: 1px;
  background: #a8a8a8;
}
.pname.tree.last::before {
  bottom: 9px;
}
.pname.tree::after {
  content: "";
  position: absolute;
  left: 9px;
  top: 9px;
  width: 16px;
  height: 1px;
  background: #a8a8a8;
}
.status {
  height: 21px;
  flex: none;
  display: flex;
  gap: 3px;
  align-items: stretch;
  background: #f0f0f0;
  border-top: 1px solid #fff;
  box-sizing: border-box;
}
.scell {
  box-sizing: border-box;
  display: flex;
  align-items: center;
  padding-left: 2px;
  border: 1px solid #dcdcdc;
  border-bottom: 0;
  background: #f6f6f6;
  white-space: nowrap;
}
.s0 {
  width: 17px;
}
.s1 {
  width: 77px;
}
.s2 {
  width: 97px;
}
.s3 {
  width: 47px;
}
.s4 {
  width: 913px;
}
.s5 {
  flex: 1;
}
.taskbar {
  height: 5px;
  flex: none;
  display: flex;
  gap: 3px;
  background: #6f88a4;
}
.task {
  width: 100px;
  background: linear-gradient(#d8dee6, #aab4c0);
  border-radius: 2px 2px 0 0;
}
.meter {
  position: absolute;
  left: 1226px;
  top: 637px;
  width: 10px;
  height: 59px;
  box-sizing: border-box;
  padding: 6px 1px 0 4px;
  background: #4a4f58;
  border-radius: 4px 0 0 4px;
  display: flex;
  flex-direction: column;
  gap: 1px;
}
.meter i {
  height: 2px;
  flex: none;
}
.marks {
  position: absolute;
  left: 0;
  top: 0;
  pointer-events: none;
}
.marks polygon {
  fill: #f8393b;
}
</style>
